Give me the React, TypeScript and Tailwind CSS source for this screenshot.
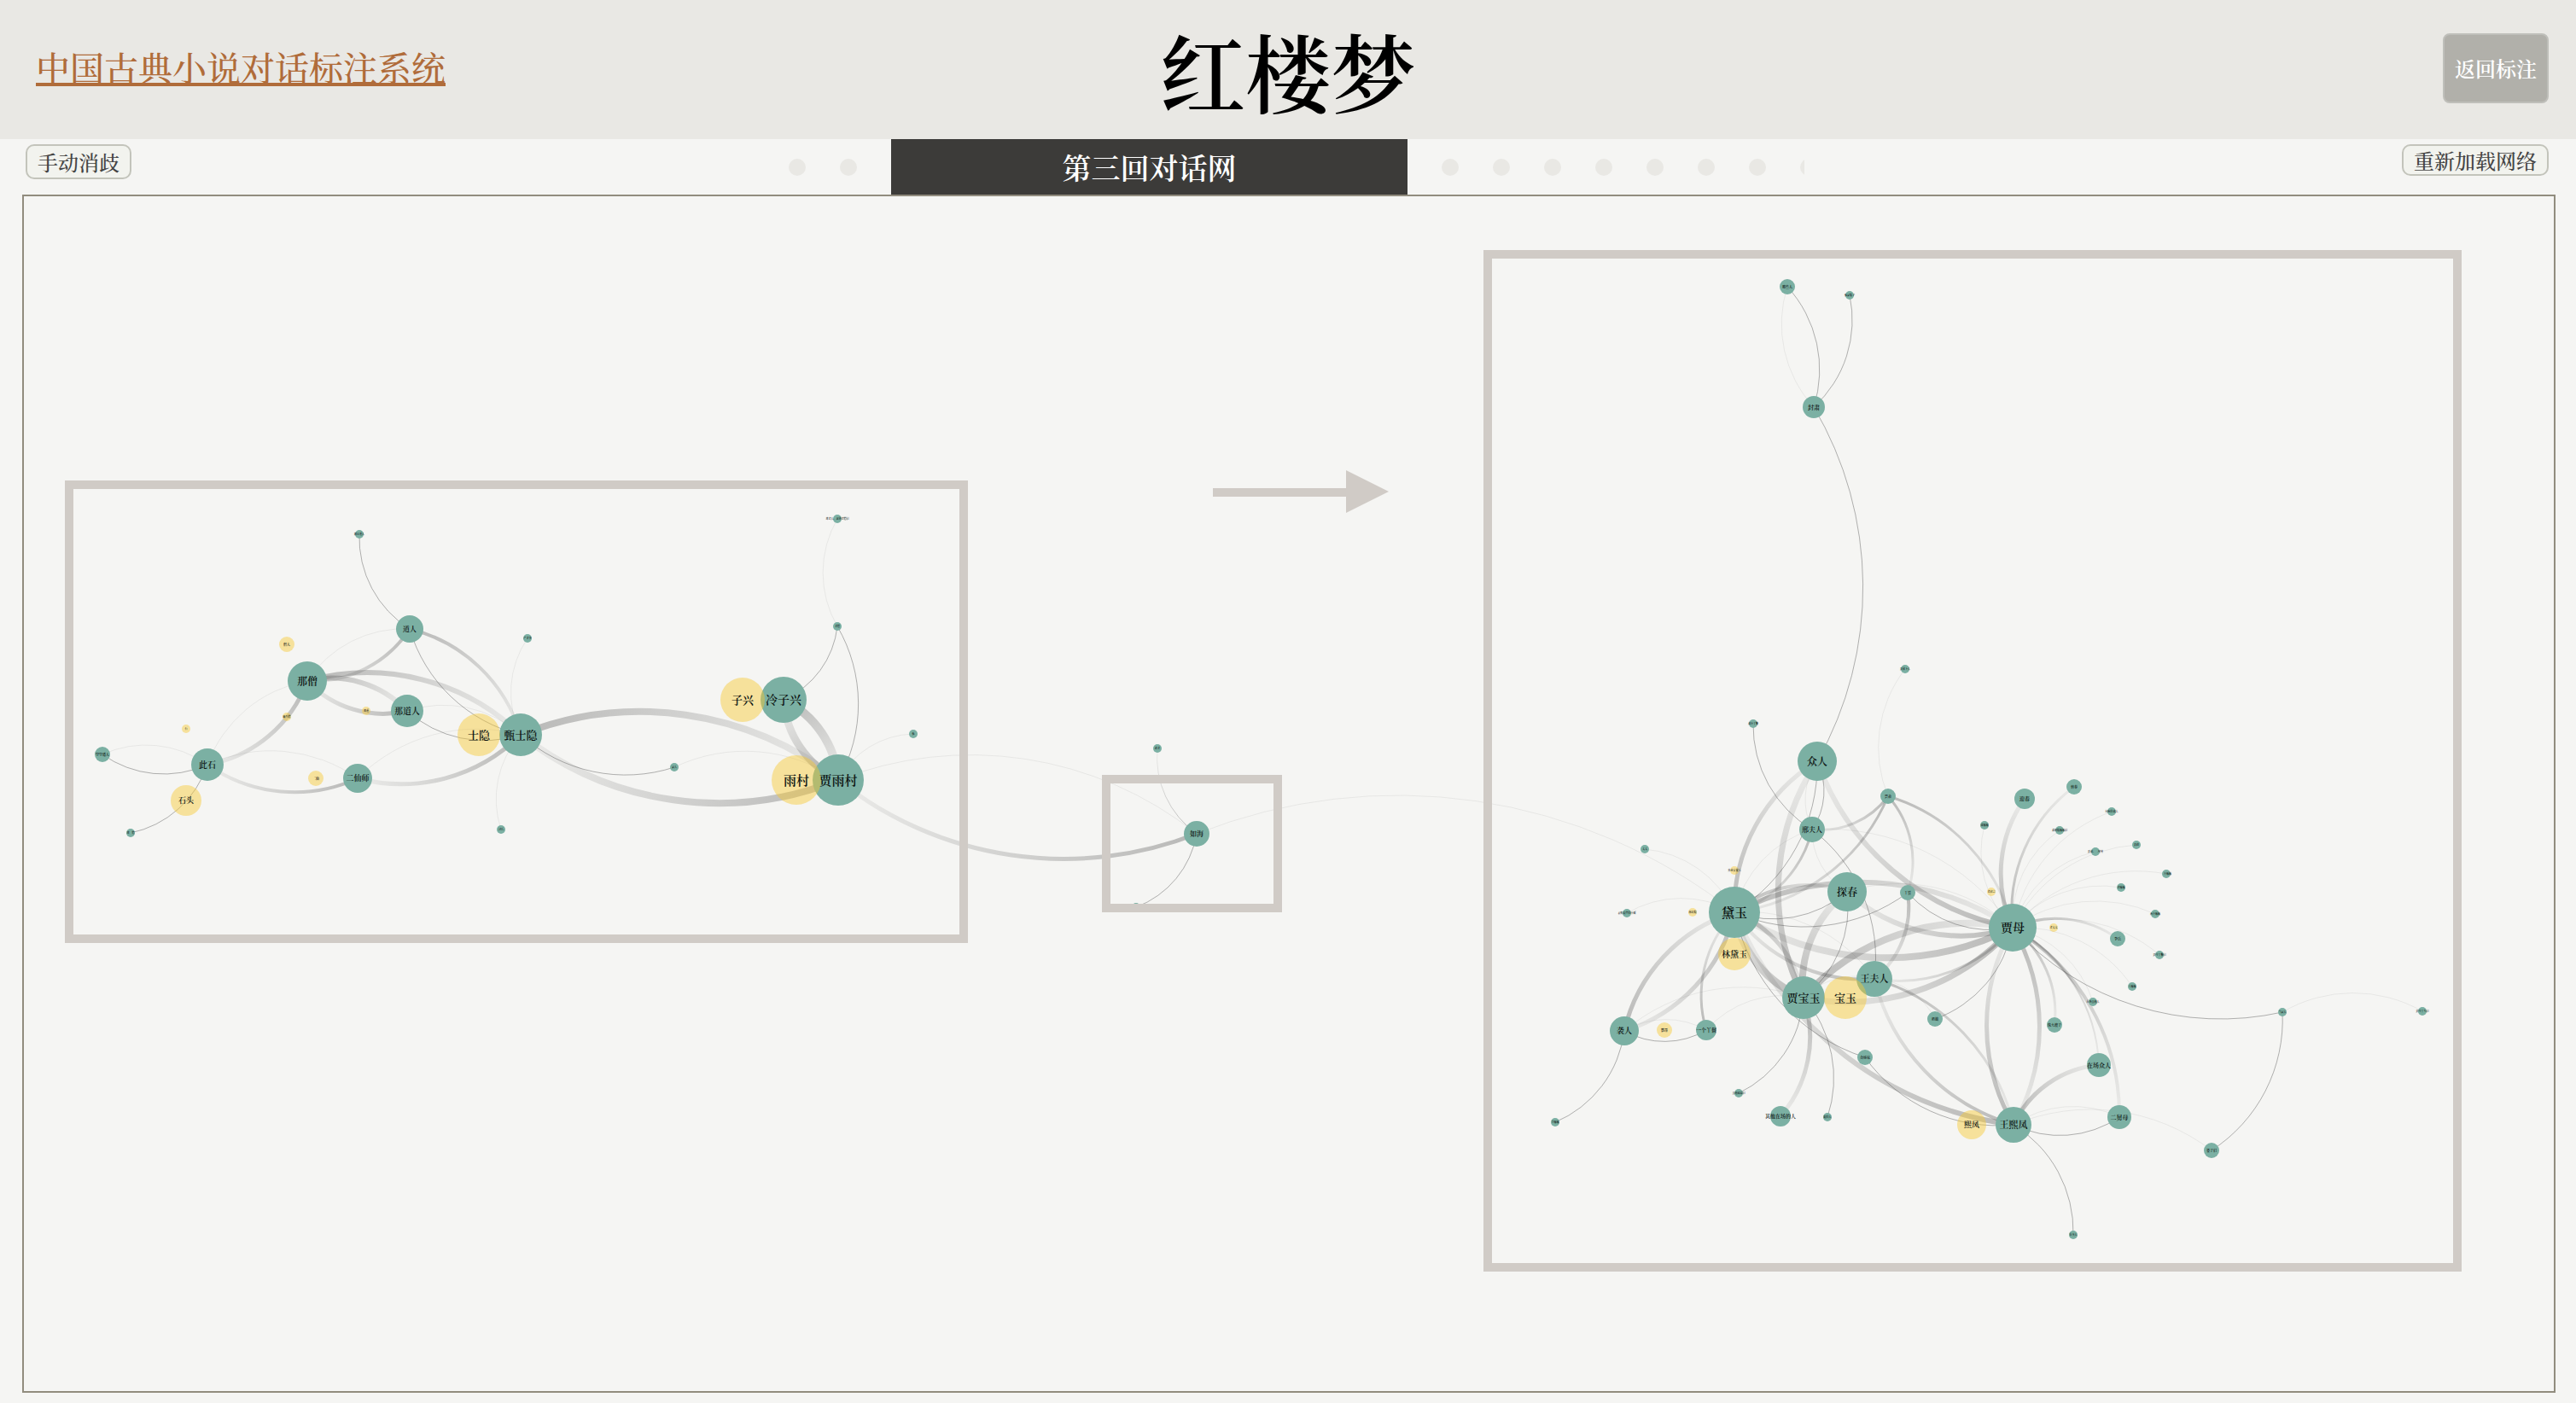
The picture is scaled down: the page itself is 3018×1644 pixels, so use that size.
import React from "react";

type Kind = "green" | "yellow";
type Person = { id: string; label: string; x: number; y: number; r: number; kind?: Kind };
type Tone = "fade" | "dark" | "light";
type Link = [from: string, to: string, width: number, tone: Tone];

const people: Person[] = [
  { id: "bozu", label: "跛足道人", x: 421, y: 626, r: 5 },
  { id: "daoren", label: "道人", x: 480, y: 737, r: 16 },
  { id: "naseng", label: "那僧", x: 360, y: 798, r: 23 },
  { id: "nadaoren", label: "那道人", x: 477, y: 833, r: 19 },
  { id: "kongkong", label: "空空道人", x: 120, y: 884, r: 9 },
  { id: "cishi", label: "此石", x: 243, y: 896, r: 19 },
  { id: "erxianshi", label: "二仙师", x: 419, y: 912, r: 17 },
  { id: "zhen", label: "甄士隐", x: 610, y: 861, r: 25 },
  { id: "yan", label: "严老爷", x: 618, y: 748, r: 5 },
  { id: "yiseng", label: "那一僧", x: 153, y: 976, r: 5 },
  { id: "feng", label: "封氏", x: 587, y: 972, r: 5 },
  { id: "laoseng", label: "那老人、龙钟老僧们", x: 981, y: 608, r: 5 },
  { id: "zhitong", label: "老僧", x: 981, y: 734, r: 5 },
  { id: "leng", label: "冷子兴", x: 918, y: 820, r: 27 },
  { id: "yucun", label: "贾雨村", x: 982, y: 914, r: 30 },
  { id: "zhenjia", label: "甄", x: 1070, y: 860, r: 5 },
  { id: "jiaren", label: "家人", x: 790, y: 899, r: 5 },
  { id: "zhenglao", label: "政老", x: 1356, y: 877, r: 5 },
  { id: "ruhai", label: "如海", x: 1402, y: 977, r: 15 },
  { id: "jiashi", label: "贾氏", x: 1331, y: 1063, r: 5 },
  { id: "naxie", label: "那些人", x: 2094, y: 336, r: 9 },
  { id: "niangzi", label: "甄家娘子", x: 2167, y: 346, r: 5 },
  { id: "fengsu", label: "封肃", x: 2125, y: 477, r: 13 },
  { id: "shexia", label: "贾赦下人", x: 2232, y: 784, r: 5 },
  { id: "xingxia", label: "众小丫鬟", x: 2054, y: 848, r: 5 },
  { id: "zhongren", label: "众人", x: 2129, y: 892, r: 23 },
  { id: "jiashe", label: "贾赦", x: 2212, y: 933, r: 9 },
  { id: "xing", label: "邢夫人", x: 2123, y: 972, r: 15 },
  { id: "taitai", label: "太太", x: 1927, y: 995, r: 5 },
  { id: "daiyu", label: "黛玉", x: 2032, y: 1069, r: 30 },
  { id: "xiaosi", label: "衣帽周全的小厮", x: 1906, y: 1070, r: 5 },
  { id: "tanchun", label: "探春", x: 2164, y: 1045, r: 23 },
  { id: "yahuan", label: "丫鬟", x: 2235, y: 1046, r: 9 },
  { id: "wang", label: "王夫人", x: 2196, y: 1147, r: 21 },
  { id: "baoyu", label: "贾宝玉", x: 2113, y: 1169, r: 25 },
  { id: "xiren", label: "袭人", x: 1903, y: 1208, r: 17 },
  { id: "yigeyahuan", label: "一个丫鬟", x: 1999, y: 1207, r: 12 },
  { id: "zimei", label: "众姊妹", x: 2185, y: 1239, r: 9 },
  { id: "qitazimei", label: "其他姊妹们", x: 2037, y: 1281, r: 5 },
  { id: "qita", label: "其他在场的人", x: 2086, y: 1308, r: 12 },
  { id: "genren", label: "跟的人", x: 2141, y: 1309, r: 5 },
  { id: "limama", label: "李嬷嬷", x: 1822, y: 1315, r: 5 },
  { id: "yingchun", label: "迎春", x: 2372, y: 936, r: 12 },
  { id: "xichun", label: "惜春", x: 2430, y: 922, r: 9 },
  { id: "mama", label: "众嬷嬷", x: 2325, y: 967, r: 5 },
  { id: "nainiang", label: "众奶娘嬷嬷们", x: 2413, y: 973, r: 5 },
  { id: "shihou", label: "伺候的众人", x: 2474, y: 951, r: 5 },
  { id: "jiujiu", label: "贾赦、二舅舅", x: 2455, y: 998, r: 5 },
  { id: "jiazheng", label: "贾政", x: 2503, y: 990, r: 5 },
  { id: "sange", label: "三个嬷嬷", x: 2538, y: 1024, r: 5 },
  { id: "lao", label: "老嬷嬷", x: 2485, y: 1040, r: 5 },
  { id: "lianggemama", label: "两个嬷嬷", x: 2525, y: 1071, r: 5 },
  { id: "jiamu", label: "贾母", x: 2358, y: 1087, r: 28 },
  { id: "lishi", label: "李氏", x: 2481, y: 1100, r: 9 },
  { id: "yaotou", label: "贾母丫鬟们", x: 2530, y: 1119, r: 5 },
  { id: "wangmama", label: "王嬷嬷", x: 2498, y: 1156, r: 5 },
  { id: "zaichangqita", label: "在场其他人", x: 2452, y: 1174, r: 5 },
  { id: "zhuda", label: "珠大嫂子", x: 2407, y: 1201, r: 9 },
  { id: "naimu", label: "奶娘", x: 2267, y: 1194, r: 9 },
  { id: "zaichang", label: "在场众人", x: 2459, y: 1248, r: 14 },
  { id: "erjiumu", label: "二舅母", x: 2483, y: 1309, r: 14 },
  { id: "xifeng", label: "王熙凤", x: 2359, y: 1318, r: 21 },
  { id: "pozi", label: "婆子们", x: 2591, y: 1348, r: 9 },
  { id: "guanshi", label: "管事人", x: 2429, y: 1447, r: 5 },
  { id: "dangjia", label: "当家人", x: 2674, y: 1186, r: 5 },
  { id: "yatoumen", label: "贾母丫头们", x: 2838, y: 1185, r: 5 },
  { id: "a-sengren", label: "僧人", x: 336, y: 755, r: 9, kind: "yellow" },
  { id: "a-laitou", label: "癞头僧", x: 336, y: 840, r: 5, kind: "yellow" },
  { id: "a-nadao", label: "那道", x: 429, y: 833, r: 5, kind: "yellow" },
  { id: "a-shi", label: "石", x: 218, y: 854, r: 5, kind: "yellow" },
  { id: "a-shitou", label: "石头", x: 218, y: 938, r: 18, kind: "yellow" },
  { id: "a-erxian", label: "二仙", x: 370, y: 912, r: 9, kind: "yellow" },
  { id: "a-shiyin", label: "士隐", x: 561, y: 861, r: 25, kind: "yellow" },
  { id: "a-zixing", label: "子兴", x: 870, y: 820, r: 26, kind: "yellow" },
  { id: "a-yucun", label: "雨村", x: 933, y: 914, r: 29, kind: "yellow" },
  { id: "a-waisun", label: "外孙女黛玉", x: 2032, y: 1020, r: 5, kind: "yellow" },
  { id: "a-lin", label: "林姑娘", x: 1983, y: 1069, r: 5, kind: "yellow" },
  { id: "a-lindaiyu", label: "林黛玉", x: 2032, y: 1118, r: 19, kind: "yellow" },
  { id: "a-baoyu", label: "宝玉", x: 2162, y: 1169, r: 25, kind: "yellow" },
  { id: "a-yingge", label: "鹦哥", x: 1950, y: 1207, r: 9, kind: "yellow" },
  { id: "a-laozu", label: "老祖宗", x: 2333, y: 1045, r: 5, kind: "yellow" },
  { id: "a-laotai", label: "老太太", x: 2406, y: 1087, r: 5, kind: "yellow" },
  { id: "a-xifeng", label: "熙凤", x: 2310, y: 1318, r: 17, kind: "yellow" },
];

const links: Link[] = [
  ["daoren", "bozu", 1, "dark"],
  ["naseng", "daoren", 1, "light"],
  ["daoren", "naseng", 4, "fade"],
  ["daoren", "zhen", 4, "fade"],
  ["zhen", "daoren", 1, "dark"],
  ["naseng", "zhen", 6, "fade"],
  ["naseng", "nadaoren", 6, "fade"],
  ["nadaoren", "naseng", 5, "fade"],
  ["nadaoren", "zhen", 1, "light"],
  ["zhen", "nadaoren", 1, "dark"],
  ["cishi", "naseng", 1, "light"],
  ["naseng", "cishi", 5, "fade"],
  ["kongkong", "cishi", 1, "light"],
  ["cishi", "kongkong", 1, "dark"],
  ["cishi", "erxianshi", 1, "light"],
  ["erxianshi", "cishi", 4, "fade"],
  ["erxianshi", "zhen", 1, "light"],
  ["zhen", "erxianshi", 5, "fade"],
  ["cishi", "yiseng", 1, "dark"],
  ["zhen", "yan", 1, "light"],
  ["feng", "zhen", 1, "light"],
  ["zhen", "yucun", 8, "fade"],
  ["yucun", "zhen", 8, "fade"],
  ["jiaren", "zhen", 1, "dark"],
  ["jiaren", "yucun", 1, "light"],
  ["zhitong", "laoseng", 1, "light"],
  ["zhitong", "leng", 1, "dark"],
  ["zhitong", "yucun", 1, "dark"],
  ["leng", "yucun", 10, "fade"],
  ["yucun", "leng", 9, "fade"],
  ["yucun", "zhenjia", 1, "light"],
  ["yucun", "ruhai", 1, "light"],
  ["ruhai", "yucun", 5, "fade"],
  ["ruhai", "zhenglao", 1, "fade"],
  ["ruhai", "jiashi", 1, "dark"],
  ["ruhai", "daiyu", 1, "light"],
  ["fengsu", "naxie", 1, "light"],
  ["naxie", "fengsu", 1, "dark"],
  ["niangzi", "fengsu", 1, "dark"],
  ["fengsu", "zhongren", 1, "dark"],
  ["jiashe", "shexia", 1, "light"],
  ["xing", "xingxia", 1, "dark"],
  ["jiashe", "xing", 3, "fade"],
  ["jiashe", "daiyu", 3, "fade"],
  ["jiashe", "yahuan", 3, "fade"],
  ["jiashe", "jiamu", 3, "fade"],
  ["zhongren", "xing", 1, "dark"],
  ["xing", "zhongren", 1, "light"],
  ["daiyu", "zhongren", 5, "fade"],
  ["zhongren", "daiyu", 1, "dark"],
  ["baoyu", "zhongren", 7, "fade"],
  ["jiamu", "zhongren", 6, "fade"],
  ["daiyu", "xing", 1, "light"],
  ["xing", "daiyu", 3, "fade"],
  ["xing", "jiamu", 1, "light"],
  ["xing", "wang", 1, "dark"],
  ["tanchun", "xing", 1, "light"],
  ["daiyu", "tanchun", 4, "fade"],
  ["daiyu", "jiamu", 6, "fade"],
  ["tanchun", "daiyu", 1, "dark"],
  ["yahuan", "daiyu", 1, "dark"],
  ["daiyu", "wang", 1, "light"],
  ["wang", "daiyu", 4, "fade"],
  ["jiamu", "daiyu", 8, "fade"],
  ["daiyu", "baoyu", 5, "fade"],
  ["baoyu", "daiyu", 9, "fade"],
  ["xiren", "daiyu", 5, "fade"],
  ["daiyu", "xiren", 5, "fade"],
  ["yigeyahuan", "daiyu", 3, "fade"],
  ["taitai", "daiyu", 1, "light"],
  ["xiaosi", "daiyu", 1, "light"],
  ["zimei", "daiyu", 1, "dark"],
  ["xifeng", "daiyu", 6, "fade"],
  ["tanchun", "baoyu", 1, "dark"],
  ["baoyu", "tanchun", 8, "fade"],
  ["jiamu", "tanchun", 6, "fade"],
  ["tanchun", "jiamu", 1, "light"],
  ["baoyu", "jiamu", 8, "fade"],
  ["jiamu", "baoyu", 7, "fade"],
  ["xiren", "baoyu", 1, "light"],
  ["yigeyahuan", "baoyu", 1, "light"],
  ["xiren", "yigeyahuan", 1, "light"],
  ["yigeyahuan", "xiren", 1, "dark"],
  ["xiren", "limama", 1, "dark"],
  ["baoyu", "qitazimei", 1, "dark"],
  ["baoyu", "qita", 5, "fade"],
  ["baoyu", "genren", 1, "dark"],
  ["baoyu", "wang", 1, "light"],
  ["yahuan", "wang", 4, "fade"],
  ["jiamu", "yahuan", 1, "dark"],
  ["jiamu", "wang", 3, "fade"],
  ["wang", "xifeng", 3, "fade"],
  ["xifeng", "wang", 4, "fade"],
  ["wang", "naimu", 1, "light"],
  ["jiamu", "naimu", 1, "dark"],
  ["xifeng", "zimei", 1, "dark"],
  ["xifeng", "jiamu", 5, "fade"],
  ["jiamu", "xifeng", 5, "fade"],
  ["jiamu", "yingchun", 5, "fade"],
  ["jiamu", "xichun", 3, "fade"],
  ["jiamu", "mama", 1, "light"],
  ["jiamu", "nainiang", 1, "light"],
  ["jiamu", "shihou", 1, "light"],
  ["jiamu", "jiujiu", 1, "light"],
  ["jiamu", "jiazheng", 1, "light"],
  ["jiamu", "sange", 1, "light"],
  ["jiamu", "lao", 1, "light"],
  ["jiamu", "lianggemama", 1, "light"],
  ["jiamu", "yaotou", 1, "light"],
  ["jiamu", "wangmama", 1, "light"],
  ["jiamu", "zaichangqita", 1, "light"],
  ["jiamu", "lishi", 3, "fade"],
  ["jiamu", "zhuda", 3, "fade"],
  ["jiamu", "zaichang", 2, "fade"],
  ["jiamu", "erjiumu", 4, "fade"],
  ["dangjia", "jiamu", 1, "dark"],
  ["xifeng", "zaichang", 5, "fade"],
  ["xifeng", "erjiumu", 1, "light"],
  ["erjiumu", "xifeng", 1, "dark"],
  ["xifeng", "pozi", 1, "light"],
  ["xifeng", "guanshi", 1, "dark"],
  ["dangjia", "yatoumen", 1, "light"],
  ["dangjia", "pozi", 1, "dark"],
];

const byId = new Map(people.map((p) => [p.id, p]));

function Edge({ link, index }: { link: Link; index: number }) {
  const [from, to, width, tone] = link;
  const a = byId.get(from)!;
  const b = byId.get(to)!;
  const radius = Math.round(Math.hypot(b.x - a.x, b.y - a.y));
  const d = `M${a.x} ${a.y}A${radius} ${radius} 0 0 1 ${b.x} ${b.y}`;
  if (tone === "dark") return <path d={d} strokeWidth={width} className="fill-none stroke-[#444444]/40" />;
  if (tone === "light") return <path d={d} strokeWidth={width} className="fill-none stroke-[#444444]/8" />;
  const gradient = `edge-${index}`;
  return (
    <>
      <linearGradient id={gradient} gradientUnits="userSpaceOnUse" x1={a.x} y1={a.y} x2={b.x} y2={b.y}>
        <stop offset="0" stopColor="#444444" stopOpacity="0.34" />
        <stop offset="1" stopColor="#444444" stopOpacity="0.06" />
      </linearGradient>
      <path d={d} strokeWidth={width} stroke={`url(#${gradient})`} className="fill-none" />
    </>
  );
}

function Node({ person }: { person: Person }) {
  const { x, y, r, label, kind = "green" } = person;
  const size = Math.max(3, Math.round(r * 0.52 - 0.2));
  return (
    <g>
      <circle cx={x} cy={y} r={r} className={kind === "green" ? "fill-[#7bb0a3]" : "fill-[#f7c934]/46"} />
      <text x={x} y={y + Math.round(size * 0.38)} fontSize={size} textAnchor="middle" className="fill-[#0d1412] font-semibold">
        {label}
      </text>
    </g>
  );
}

function Network() {
  return (
    <svg viewBox="28 230 2964 1400" className="block h-auto w-full" role="img" aria-label="第三回对话网">
      {links.map((link, i) => (
        <Edge key={i} link={link} index={i} />
      ))}
      {people.map((p) => (
        <Node key={p.id} person={p} />
      ))}
      <g className="fill-none stroke-[#d0cbc6]" strokeWidth="10">
        <rect x="81" y="568" width="1048" height="532" />
        <rect x="1296" y="913" width="201" height="151" />
        <rect x="1743" y="298" width="1136" height="1187" />
        <path d="M1421 577H1580" />
      </g>
      <path d="M1577 551L1627 576L1577 601Z" className="fill-[#d0cbc6]" />
    </svg>
  );
}

function Dots({ count, first }: { count: number; first: number }) {
  return (
    <>
      {Array.from({ length: count }, (_, i) => (
        <button key={i} type="button" aria-label={`第${first + i}回`} className="mx-5 size-5 shrink-0 rounded-full bg-[#e9e8e4]" />
      ))}
    </>
  );
}

export default function App() {
  return (
    <div className="min-h-screen bg-[#f5f5f3] pb-3 font-['Songti_SC','Noto_Serif_CJK_SC','Noto_Sans_CJK_SC',serif] text-[#444444]">
      <header className="grid h-[163px] grid-cols-[1fr_auto_1fr] items-center bg-[#e9e8e4] px-8">
        <a
          href="#home"
          className="ml-2.5 justify-self-start pb-2 text-[40px] leading-[60px] font-medium text-[#b06c3a] underline decoration-4 underline-offset-2"
        >
          中国古典小说对话标注系统
        </a>
        <h1 className="text-[100px] leading-none font-semibold text-black">红楼梦</h1>
        <button
          type="button"
          className="mb-1 h-[82px] justify-self-end rounded-lg border-2 border-[#bfbfba] bg-[#b1b0aa] px-3 text-2xl font-semibold text-white"
        >
          返回标注
        </button>
      </header>
      <div className="grid h-[65px] grid-cols-[1fr_40.1%_1fr]">
        <div className="pt-1.5 pl-[30px]">
          <button type="button" className="block h-[41px] rounded-[10px] border-2 border-[#c3c4bb] bg-[#f2f3ee] px-3 text-2xl leading-none font-medium">
            手动消歧
          </button>
        </div>
        <nav className="flex items-center overflow-hidden" aria-label="章回">
          <Dots count={2} first={1} />
          <button
            type="button"
            aria-current="page"
            className="mx-5 h-full w-1/2 shrink-0 bg-[#3c3b39] text-[34px] leading-none font-semibold text-white"
          >
            第三回对话网
          </button>
          <Dots count={8} first={4} />
        </nav>
        <div className="pt-1.5 pr-8">
          <button
            type="button"
            className="ml-auto block h-[37px] rounded-[10px] border-2 border-[#c3c4bb] bg-[#f2f3ee] px-3 text-2xl leading-none font-medium"
          >
            重新加载网络
          </button>
        </div>
      </div>
      <main className="mr-6 ml-[26px] border-2 border-[#918c7e]">
        <Network />
      </main>
    </div>
  );
}
